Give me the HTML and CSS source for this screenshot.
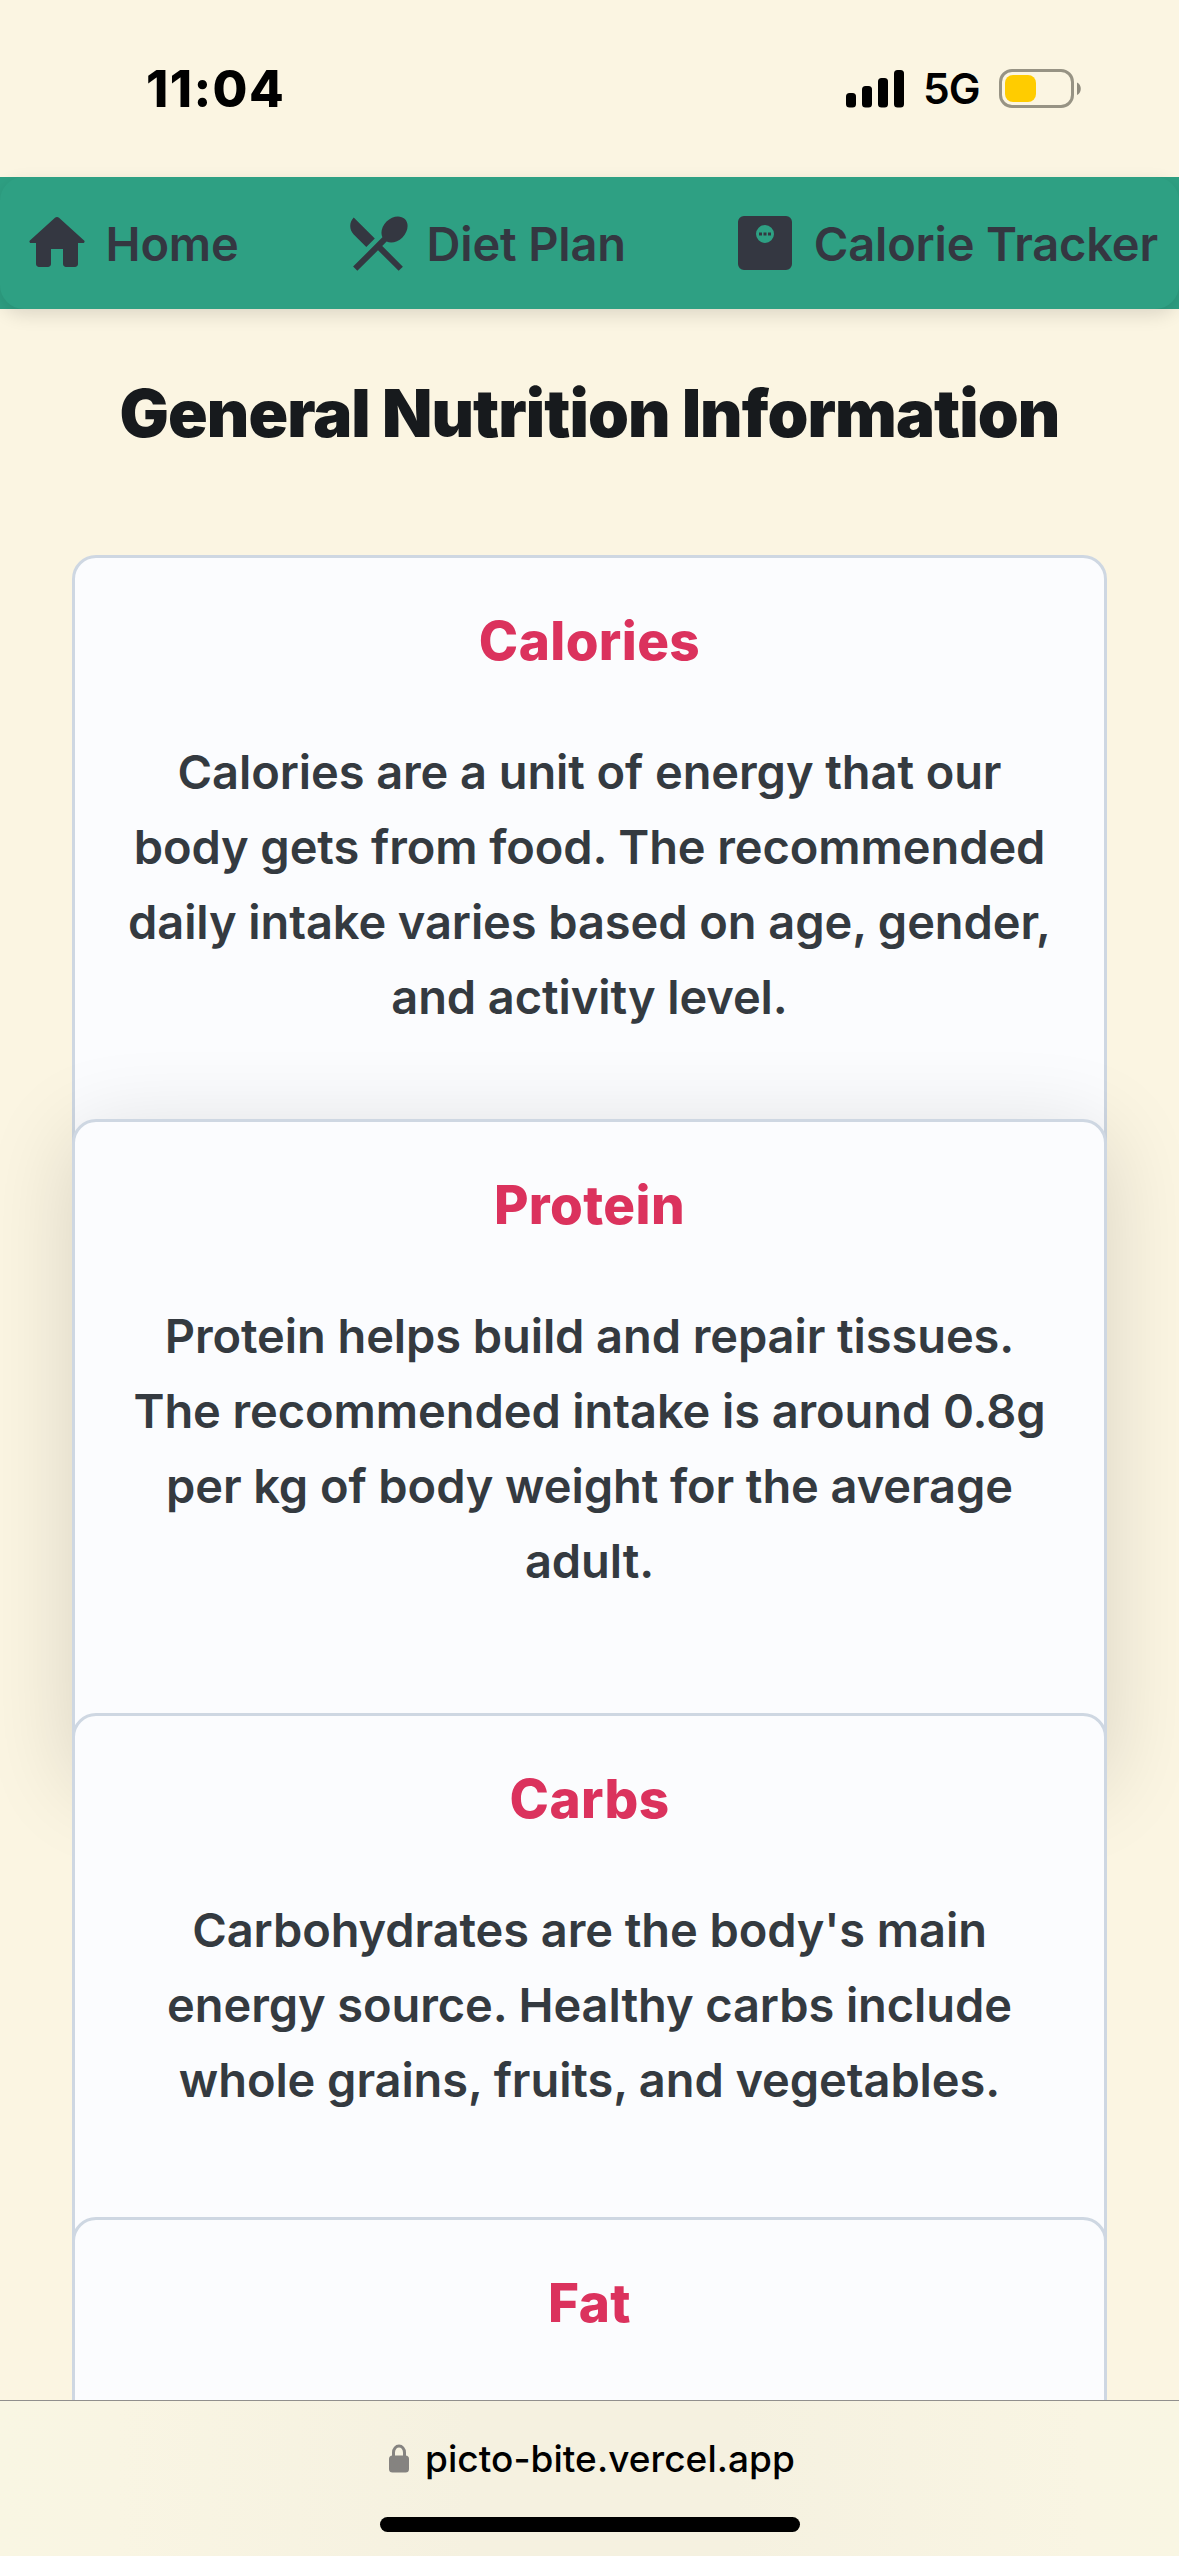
FILE: index.html
```html
<!DOCTYPE html>
<html lang="en">
<head>
<meta charset="utf-8">
<title>Picto Bite</title>
<link rel="stylesheet" href="styles.css">
</head>
<body>
<div class="status">
  <span class="time">11:04</span>
  <div class="status-right">
    <svg class="signal" width="58" height="38" viewBox="0 0 58 38"><rect y="23" width="10" height="14.500" rx="3.500"/><rect x="16" y="16" width="10" height="21.500" rx="3.500"/><rect x="32" y="8" width="10" height="29.500" rx="3.500"/><rect x="48" y="0" width="10" height="37.500" rx="3.500"/></svg>
    <span class="network">5G</span>
    <svg class="battery" width="83" height="39" viewBox="0 0 83 39"><rect x="1.500" y="1.500" width="72" height="36" rx="11.500" fill="none" stroke="#979384" stroke-width="3"/><rect x="6" y="6" width="31" height="27" rx="8" fill="#ffcc00"/><path d="M78 13.500c5 2 5 10.500 0 12.500z" fill="#8f8b7d"/></svg>
  </div>
</div>
<header class="header">
  <nav class="nav">
    <a class="nav-item">
      <svg class="nav-icon" viewBox="0 0 24 24"><path d="M10 19v-5h4v5c0 .55.45 1 1 1h3c.55 0 1-.45 1-1v-7h1.700c.46 0 .68-.57.33-.87L12.670 3.600c-.38-.34-.96-.34-1.340 0l-8.360 7.530c-.34.3-.13.87.33.87H5v7c0 .55.45 1 1 1h3c.55 0 1-.45 1-1z"/></svg>
      <span>Home</span>
    </a>
    <a class="nav-item">
      <svg class="nav-icon" viewBox="0 0 24 24"><path d="M8.100 13.340l2.830-2.830L3.910 3.500c-1.560 1.560-1.560 4.090 0 5.660l4.190 4.180zm6.780-1.810c1.530.71 3.680.21 5.270-1.380 1.910-1.910 2.280-4.650.81-6.120-1.460-1.460-4.200-1.100-6.120.81-1.590 1.590-2.090 3.740-1.380 5.270L3.700 19.870l1.410 1.410L12 14.410l6.880 6.880 1.410-1.410L13.410 13l1.470-1.470z"/></svg>
      <span>Diet Plan</span>
    </a>
    <a class="nav-item">
      <svg class="nav-icon" viewBox="0 0 24 24"><path fill-rule="evenodd" d="M5 3h14a2 2 0 0 1 2 2v14a2 2 0 0 1-2 2H5a2 2 0 0 1-2-2V5a2 2 0 0 1 2-2zM12 6a3 3 0 1 0 0 6a3 3 0 1 0 0-6z"/><path d="M10 8.500h1v1h-1zM11.500 8.500h1v1h-1zM13 8.500h1v1h-1z"/></svg>
      <span>Calorie Tracker</span>
    </a>
  </nav>
</header>
<main class="main">
  <h1 class="heading">General Nutrition Information</h1>
  <section class="cards">
    <article class="card card-calories">
      <h2 class="title">Calories</h2>
      <p class="text">Calories are a unit of energy that our<br>body gets from food. The recommended<br>daily intake varies based on age, gender,<br>and activity level.</p>
    </article>
    <article class="card card-protein">
      <h2 class="title">Protein</h2>
      <p class="text">Protein helps build and repair tissues.<br>The recommended intake is around 0.8g<br>per kg of body weight for the average<br>adult.</p>
    </article>
    <article class="card card-carbs">
      <h2 class="title">Carbs</h2>
      <p class="text">Carbohydrates are the body's main<br>energy source. Healthy carbs include<br>whole grains, fruits, and vegetables.</p>
    </article>
    <article class="card card-fat">
      <h2 class="title">Fat</h2>
    </article>
  </section>
</main>
<footer class="browser-bar">
  <div class="address">
    <svg class="lock" width="20" height="29" viewBox="0 0 20 29"><path d="M4.500 13V8.500a5.500 6.500 0 0 1 11 0V13" fill="none" stroke="#858380" stroke-width="3"/><rect y="11.500" width="20" height="17" rx="3.500" fill="#858380"/></svg>
    <span class="url">picto-bite.vercel.app</span>
  </div>
  <div class="home-indicator"></div>
</footer>
</body>
</html>
```
FILE: styles.css
```css
* { box-sizing: border-box; }
body {
  margin: 0;
  width: 1179px;
  height: 2556px;
  overflow: hidden;
  display: flex;
  flex-direction: column;
  background: #fbf5e2;
  font-family: Inter, "Liberation Sans", sans-serif;
  color: #343a40;
}
.status {
  flex: none;
  height: 177px;
  display: flex;
  align-items: center;
  justify-content: space-between;
  padding: 0 97px 0 146px;
  color: #000;
}
.time { font-size: 50.5px; font-weight: 800; letter-spacing: 1.4px; }
.status-right { display: flex; align-items: center; }
.network { font-size: 42.5px; font-weight: 600; width: 56px; margin: 0 20px 0 19px; letter-spacing: -1px; white-space: nowrap; }
.signal, .battery, .lock, .nav-icon { display: block; flex: none; }
.header { flex: none; height: 132px; background: #2ea083; }
.nav {
  height: 132px;
  border-radius: 24px;
  box-shadow: 0 6px 18px rgba(0, 0, 0, .12);
  display: flex;
  align-items: center;
  justify-content: space-between;
  padding: 0 21px;
  color: #343741;
}
.nav-item {
  display: flex;
  align-items: center;
  gap: 12.5px;
  font-size: 47px;
  font-weight: 600;
  letter-spacing: -.16px;
  white-space: nowrap;
}
.nav-icon { width: 72px; height: 72px; fill: currentColor; }
.main { flex: 1; min-height: 0; padding: 65px 72px 0; overflow: hidden; }
.heading {
  margin: 0 -40px 101px;
  font-size: 65.5px;
  line-height: 80px;
  font-weight: 900;
  letter-spacing: -.9px;
  text-align: center;
  white-space: nowrap;
  color: #171a1d;
}
.cards { display: flex; flex-direction: column; }
.card {
  flex: none;
  position: relative;
  padding-top: 44px;
  border: 3px solid #ced7e2;
  border-radius: 24px;
  background: #fbfcfe;
  text-align: center;
}
.card + .card { margin-top: -60px; }
.card-calories { height: 624px; }
.card-protein { height: 654px; box-shadow: 0 15px 90px rgba(0, 0, 0, .14); }
.card-carbs { height: 564px; }
.card-fat { height: 564px; }
.title {
  margin: 0 0 54px;
  font-size: 53px;
  line-height: 78px;
  font-weight: 800;
  letter-spacing: .4px;
  color: #db325d;
}
.text {
  margin: 0;
  font-size: 47px;
  line-height: 75px;
  font-weight: 600;
  letter-spacing: -.09px;
  white-space: nowrap;
}
.browser-bar {
  flex: none;
  position: relative;
  height: 156px;
  padding-top: 29px;
  border-top: 1px solid #918f8d;
  background: linear-gradient(90deg, #f9f6e3 0, #f9f5e3 10%, #f5f1e0 40%, #f5f1e0 62%, #f9f5e3 92%, #f9f6e3 100%);
  display: flex;
  flex-direction: column;
  align-items: center;
}
.address {
  width: 401px;
  height: 56px;
  display: flex;
  align-items: center;
  gap: 16px;
  color: #000;
}
.url { font-size: 37px; font-weight: 500; letter-spacing: .05px; white-space: nowrap; }
.home-indicator { width: 420px; height: 15px; margin-top: 31px; border-radius: 8px; background: #000; }
```
